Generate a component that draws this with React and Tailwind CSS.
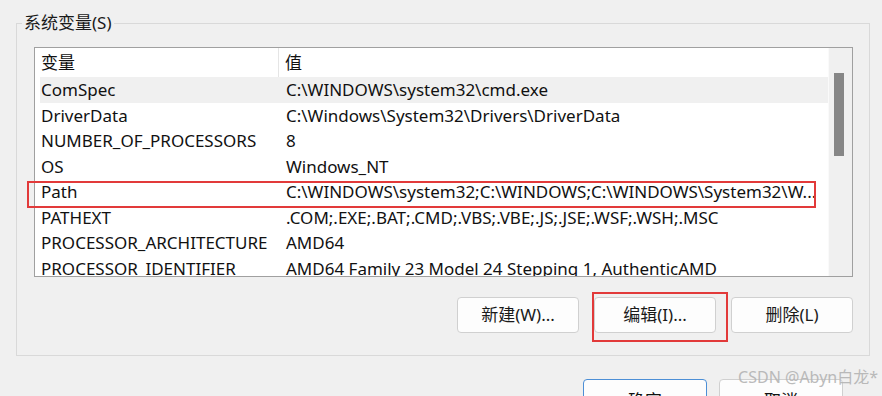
import React from 'react';

const rows = [
  ['ComSpec', 'C:\\WINDOWS\\system32\\cmd.exe'],
  ['DriverData', 'C:\\Windows\\System32\\Drivers\\DriverData'],
  ['NUMBER_OF_PROCESSORS', '8'],
  ['OS', 'Windows_NT'],
  ['Path', 'C:\\WINDOWS\\system32;C:\\WINDOWS;C:\\WINDOWS\\System32\\W...'],
  ['PATHEXT', '.COM;.EXE;.BAT;.CMD;.VBS;.VBE;.JS;.JSE;.WSF;.WSH;.MSC'],
  ['PROCESSOR_ARCHITECTURE', 'AMD64'],
  ['PROCESSOR_IDENTIFIER', 'AMD64 Family 23 Model 24 Stepping 1, AuthenticAMD'],
];

function Btn({ children, className = '' }) {
  return (
    <button
      className={`w-[122px] h-[36px] rounded-[4px] border border-[#d0d0d0] bg-[#fdfdfd] text-[17px] text-[#1a1a1a] ${className}`}
    >
      {children}
    </button>
  );
}

export default function App() {
  return (
    <div
      className="relative w-[882px] h-[396px] overflow-hidden bg-[#f0f0f0] pt-[23px] pl-[16px] text-[#111]"
      style={{ fontFamily: '"Noto Sans", "Noto Sans CJK SC", sans-serif' }}
    >
      {/* group box */}
      <div className="relative w-[854px] h-[333px] border border-[#d9d9d9] pl-[17px] pt-[23px]">
        <span className="absolute left-[5px] top-[-13px] bg-[#f0f0f0] px-[2px] text-[17px] leading-[24px] text-[#1a1a1a]">
          系统变量(S)
        </span>

        {/* list view */}
        <div className="flex w-[819px] h-[230px] border border-[#a0a0a0] bg-white">
          <div className="flex-1 flex flex-col overflow-hidden pl-[5px]">
            <div className="flex h-[29px] shrink-0 items-center text-[17px]">
              <div className="w-[239px] h-full flex items-center pl-[1px] border-r border-[#e5e5e5]">变量</div>
              <div className="pl-[6px]">值</div>
            </div>
            {rows.map(([name, value], i) => (
              <div
                key={name}
                className={`flex h-[25.5px] shrink-0 items-center text-[17px] whitespace-nowrap ${i === 0 ? 'bg-[#f0f0f0]' : ''}`}
              >
                <div className="w-[240px] shrink-0 pl-[1px]">{name}</div>
                <div className="pl-[6px] w-[535px] overflow-hidden">{value}</div>
              </div>
            ))}
          </div>
          {/* scrollbar */}
          <div className="w-[24px] shrink-0 bg-[#f0f0f0] border-l border-[#fafafa] pt-[25px] pl-[5px]">
            <div className="w-[10px] h-[83px] bg-[#868686]" />
          </div>
        </div>

        <div className="mt-[20px] flex w-[819px] justify-end gap-[15px]">
          <Btn>新建(W)...</Btn>
          <div className="relative">
            <Btn>编辑(I)...</Btn>
            <div className="absolute left-[-2px] top-[-5px] w-[136px] h-[50px] border-2 border-[#e23a3a]" />
          </div>
          <Btn>删除(L)</Btn>
        </div>
      </div>

      {/* dialog buttons */}
      <div className="mt-[23px] flex justify-end gap-[12px] pr-[39px] ml-[-16px]">
        <button className="w-[124px] h-[36px] rounded-[4px] border border-[#4c8fd6] bg-[#fdfdfd] text-[17px] pt-[8px] leading-[24px]">确定</button>
        <button className="w-[124px] h-[36px] rounded-[4px] border border-[#d0d0d0] bg-[#fdfdfd] text-[17px] pt-[8px] leading-[24px]">取消</button>
      </div>

      {/* annotation around Path row */}
      <div className="absolute left-[27px] top-[181px] w-[789px] h-[27px] border-2 border-[#e23a3a]" />

      {/* watermark */}
      <div className="absolute right-[4px] top-[367px] text-[16px] leading-[20px] text-[#b4b4b4] opacity-90">
        CSDN @Abyn白龙*
      </div>
    </div>
  );
}
